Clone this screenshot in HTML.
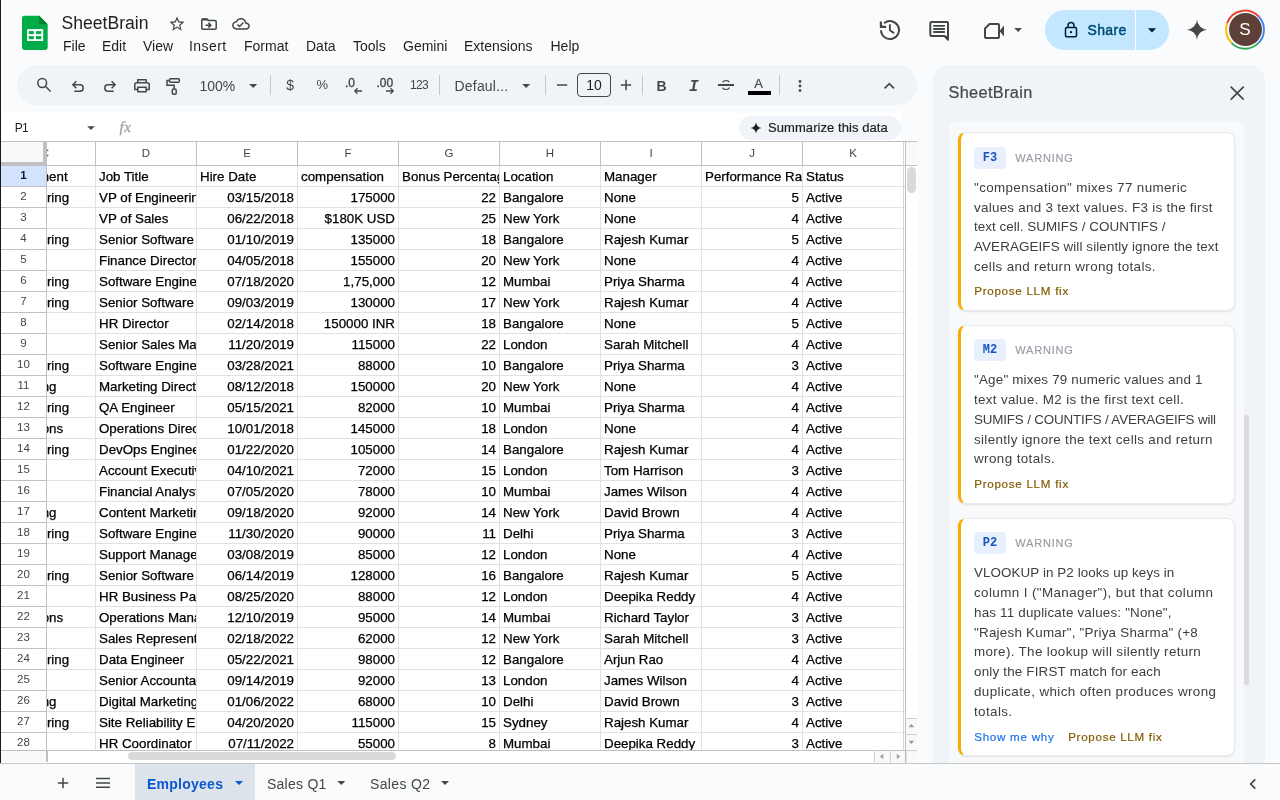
<!DOCTYPE html>
<html lang="en"><head><meta charset="utf-8"><title>SheetBrain - Google Sheets</title>
<style>
*{box-sizing:border-box;margin:0;padding:0}
html{background:#f9fbfd}
html,body{width:1280px;height:800px;overflow:hidden;background:#f9fbfd;font-family:"Liberation Sans",sans-serif;color:#1f1f1f}
body{will-change:transform;position:relative}
.abs{position:absolute}
#edge{left:0;top:0;width:1px;height:800px;background:#1b1b1b}
/* header */
#title{left:61.5px;top:11px;font-size:17.6px;line-height:24px;color:#1f1f1f;white-space:nowrap}
.menu{top:37px;font-size:14px;line-height:18px;color:#1f1f1f;white-space:nowrap}
svg{display:block;position:absolute;overflow:visible}
/* toolbar */
#tb{left:17px;top:65px;width:900px;height:40px;border-radius:20px;background:#f0f4f9}
.tsep{top:75px;width:1px;height:20px;background:#c7c7c7}
.tt{font-size:14px;line-height:18px;color:#444746;white-space:nowrap}
/* formula bar */
#fb{left:1px;top:113px;width:900px;height:28px;background:#fff}
/* grid */
#gridbg{left:1px;top:141px;width:916px;height:622px;background:#fff}
#cells{left:47px;top:142px;width:857px;height:609px;overflow:hidden;background:#fff}
.c{position:absolute;width:101px;height:21px;border-right:1px solid #e1e1e1;border-bottom:1px solid #e1e1e1;font-size:13.33px;line-height:20px;padding:1px 3px 0 3px;white-space:nowrap;overflow:hidden;color:#000;background:#fff;-webkit-text-stroke:0.25px #000}
.c.r{text-align:right}
.ch{position:absolute;top:0;width:101px;height:24px;border-right:1px solid #c0c0c0;border-bottom:1px solid #c0c0c0;font-size:11.5px;line-height:23px;text-align:center;color:#444746;background:#fff}
#rowh{left:1px;top:142px;width:46px;height:609px;overflow:hidden;background:#fff}
.rh{position:absolute;left:0;width:46px;height:21px;border-right:1px solid #c0c0c0;border-bottom:1px solid #c0c0c0;font-size:11.5px;line-height:19px;text-align:center;color:#444746;background:#fff}
.rh.sel{background:#d3e3fd;color:#041e49;font-weight:bold}
#corner{left:1px;top:142px;width:46px;height:24px;background:#f8f9fa;border-right:4px solid #c0c0c0;border-bottom:4px solid #c0c0c0}

/* share */
#share{left:1045px;top:10px;width:124px;height:40px;border-radius:20px;background:#c2e7ff}
#sharetxt{left:1087.5px;top:21px;font-size:14px;line-height:18px;-webkit-text-stroke:0.45px #004a77;letter-spacing:0.35px;color:#004a77;white-space:nowrap}
#avatar{left:1228.5px;top:13.2px;width:33px;height:33px;border-radius:50%;background:#5d4037;color:#fff;font-size:17px;line-height:34px;text-align:center}
/* formula */
#namebox{left:14.7px;top:119px;font-size:12px;line-height:18px;color:#1f1f1f;letter-spacing:-0.6px}
#fx{left:119.5px;top:116px;font-family:"Liberation Serif",serif;font-style:italic;font-size:15px;line-height:22px;color:#9aa0a6;letter-spacing:0.6px;-webkit-text-stroke:0.3px #9aa0a6}
#summ{left:739px;top:116px;width:162px;height:24px;border-radius:12px;background:#f0f4f9}
#summtxt{left:768px;top:119px;font-size:13px;line-height:18px;color:#1f1f1f;white-space:nowrap;letter-spacing:0.07px;-webkit-text-stroke:0.2px #1f1f1f}
/* scrollbars */
.ln{position:absolute;background:#c0c0c0}
/* bottom */
#bline{z-index:5;left:0;top:763px;width:1280px;height:1px;background:#c4c7c5}
#bbar{z-index:5;left:0;top:764px;width:1280px;height:36px;background:#f9fbfd}
#tab1{z-index:6;left:135px;top:764px;width:120px;height:36px;background:#dde3ea}
.tabt{z-index:7;top:774.6px;font-size:14px;line-height:18px;white-space:nowrap;color:#444746}
/* sidebar */
#side{left:933px;top:65px;width:332px;height:720px;border-radius:16px 16px 0 0;background:#f0f4f9}
#sidet{left:948.5px;top:81.2px;font-size:16.3px;line-height:22px;color:#444746;white-space:nowrap;letter-spacing:0.35px;-webkit-text-stroke:0.2px #444746}
#frame{left:949px;top:121px;width:295px;height:642px;background:#f8f9fa;border-radius:8px 8px 0 0;overflow:hidden}
.card{position:absolute;left:9px;width:276.5px;background:#fff;border:1px solid #e8eaed;border-left:3px solid #f9ab00;border-radius:8px;box-shadow:0 1px 2px rgba(60,64,67,.12)}
.badge{position:absolute;left:13px;top:13.4px;width:32px;height:22px;border-radius:4px;background:#e8f0fe;color:#1a54c0;font-family:"Liberation Mono",monospace;font-weight:bold;font-size:12px;line-height:23.4px;text-align:center}
.warn{position:absolute;left:54.3px;top:16.5px;font-size:11px;line-height:16px;letter-spacing:0.8px;color:#9aa0a6;white-space:nowrap;-webkit-text-stroke:0.2px #9aa0a6}
.ctext{position:absolute;left:13px;top:44.4px;font-size:13.4px;line-height:19.8px;color:#3c4043;white-space:nowrap}
.act{position:absolute;font-size:11.6px;line-height:16px;white-space:nowrap;color:#835b00;-webkit-text-stroke:0.2px #835b00}
.act.b{color:#1a73e8;-webkit-text-stroke:0.2px #1a73e8}
#sthumb{left:1244px;top:415px;width:5px;height:270px;border-radius:3px;background:#d9dbdf}
</style></head><body>
<div id="edge" class="abs"></div>
<div id="title" class="abs">SheetBrain</div>
<div class="abs menu" style="left:63px">File</div>
<div class="abs menu" style="left:102px">Edit</div>
<div class="abs menu" style="left:143px">View</div>
<div class="abs menu" style="left:189px;letter-spacing:0.45px">Insert</div>
<div class="abs menu" style="left:244px">Format</div>
<div class="abs menu" style="left:306px">Data</div>
<div class="abs menu" style="left:353px">Tools</div>
<div class="abs menu" style="left:403px">Gemini</div>
<div class="abs menu" style="left:464px">Extensions</div>
<div class="abs menu" style="left:550.5px">Help</div>
<div id="tb" class="abs"></div>
<div id="fb" class="abs"></div>
<div id="gridbg" class="abs"></div>
<div class="abs" style="left:1px;top:141px;width:916px;height:1px;background:#c0c0c0"></div>
<div id="cells" class="abs">
<div class="ch" style="left:-52px">C</div>
<div class="ch" style="left:49px">D</div>
<div class="ch" style="left:150px">E</div>
<div class="ch" style="left:251px">F</div>
<div class="ch" style="left:352px">G</div>
<div class="ch" style="left:453px">H</div>
<div class="ch" style="left:554px">I</div>
<div class="ch" style="left:655px">J</div>
<div class="ch" style="left:756px">K</div>
<div class="c" style="left:-52px;top:24px">Department</div>
<div class="c" style="left:49px;top:24px">Job Title</div>
<div class="c" style="left:150px;top:24px">Hire Date</div>
<div class="c" style="left:251px;top:24px">compensation</div>
<div class="c" style="left:352px;top:24px">Bonus Percentage</div>
<div class="c" style="left:453px;top:24px">Location</div>
<div class="c" style="left:554px;top:24px">Manager</div>
<div class="c" style="left:655px;top:24px">Performance Rating</div>
<div class="c" style="left:756px;top:24px">Status</div>
<div class="c" style="left:-52px;top:45px">Engineering</div>
<div class="c" style="left:49px;top:45px">VP of Engineering</div>
<div class="c r" style="left:150px;top:45px">03/15/2018</div>
<div class="c r" style="left:251px;top:45px">175000</div>
<div class="c r" style="left:352px;top:45px">22</div>
<div class="c" style="left:453px;top:45px">Bangalore</div>
<div class="c" style="left:554px;top:45px">None</div>
<div class="c r" style="left:655px;top:45px">5</div>
<div class="c" style="left:756px;top:45px">Active</div>
<div class="c" style="left:-52px;top:66px">Sales</div>
<div class="c" style="left:49px;top:66px">VP of Sales</div>
<div class="c r" style="left:150px;top:66px">06/22/2018</div>
<div class="c r" style="left:251px;top:66px">$180K USD</div>
<div class="c r" style="left:352px;top:66px">25</div>
<div class="c" style="left:453px;top:66px">New York</div>
<div class="c" style="left:554px;top:66px">None</div>
<div class="c r" style="left:655px;top:66px">4</div>
<div class="c" style="left:756px;top:66px">Active</div>
<div class="c" style="left:-52px;top:87px">Engineering</div>
<div class="c" style="left:49px;top:87px">Senior Software Engineer</div>
<div class="c r" style="left:150px;top:87px">01/10/2019</div>
<div class="c r" style="left:251px;top:87px">135000</div>
<div class="c r" style="left:352px;top:87px">18</div>
<div class="c" style="left:453px;top:87px">Bangalore</div>
<div class="c" style="left:554px;top:87px">Rajesh Kumar</div>
<div class="c r" style="left:655px;top:87px">5</div>
<div class="c" style="left:756px;top:87px">Active</div>
<div class="c" style="left:-52px;top:108px">Finance</div>
<div class="c" style="left:49px;top:108px">Finance Director</div>
<div class="c r" style="left:150px;top:108px">04/05/2018</div>
<div class="c r" style="left:251px;top:108px">155000</div>
<div class="c r" style="left:352px;top:108px">20</div>
<div class="c" style="left:453px;top:108px">New York</div>
<div class="c" style="left:554px;top:108px">None</div>
<div class="c r" style="left:655px;top:108px">4</div>
<div class="c" style="left:756px;top:108px">Active</div>
<div class="c" style="left:-52px;top:129px">Engineering</div>
<div class="c" style="left:49px;top:129px">Software Engineer</div>
<div class="c r" style="left:150px;top:129px">07/18/2020</div>
<div class="c r" style="left:251px;top:129px">1,75,000</div>
<div class="c r" style="left:352px;top:129px">12</div>
<div class="c" style="left:453px;top:129px">Mumbai</div>
<div class="c" style="left:554px;top:129px">Priya Sharma</div>
<div class="c r" style="left:655px;top:129px">4</div>
<div class="c" style="left:756px;top:129px">Active</div>
<div class="c" style="left:-52px;top:150px">Engineering</div>
<div class="c" style="left:49px;top:150px">Senior Software Engineer</div>
<div class="c r" style="left:150px;top:150px">09/03/2019</div>
<div class="c r" style="left:251px;top:150px">130000</div>
<div class="c r" style="left:352px;top:150px">17</div>
<div class="c" style="left:453px;top:150px">New York</div>
<div class="c" style="left:554px;top:150px">Rajesh Kumar</div>
<div class="c r" style="left:655px;top:150px">4</div>
<div class="c" style="left:756px;top:150px">Active</div>
<div class="c" style="left:-52px;top:171px">HR</div>
<div class="c" style="left:49px;top:171px">HR Director</div>
<div class="c r" style="left:150px;top:171px">02/14/2018</div>
<div class="c r" style="left:251px;top:171px">150000 INR</div>
<div class="c r" style="left:352px;top:171px">18</div>
<div class="c" style="left:453px;top:171px">Bangalore</div>
<div class="c" style="left:554px;top:171px">None</div>
<div class="c r" style="left:655px;top:171px">5</div>
<div class="c" style="left:756px;top:171px">Active</div>
<div class="c" style="left:-52px;top:192px">Sales</div>
<div class="c" style="left:49px;top:192px">Senior Sales Manager</div>
<div class="c r" style="left:150px;top:192px">11/20/2019</div>
<div class="c r" style="left:251px;top:192px">115000</div>
<div class="c r" style="left:352px;top:192px">22</div>
<div class="c" style="left:453px;top:192px">London</div>
<div class="c" style="left:554px;top:192px">Sarah Mitchell</div>
<div class="c r" style="left:655px;top:192px">4</div>
<div class="c" style="left:756px;top:192px">Active</div>
<div class="c" style="left:-52px;top:213px">Engineering</div>
<div class="c" style="left:49px;top:213px">Software Engineer</div>
<div class="c r" style="left:150px;top:213px">03/28/2021</div>
<div class="c r" style="left:251px;top:213px">88000</div>
<div class="c r" style="left:352px;top:213px">10</div>
<div class="c" style="left:453px;top:213px">Bangalore</div>
<div class="c" style="left:554px;top:213px">Priya Sharma</div>
<div class="c r" style="left:655px;top:213px">3</div>
<div class="c" style="left:756px;top:213px">Active</div>
<div class="c" style="left:-52px;top:234px">Marketing</div>
<div class="c" style="left:49px;top:234px">Marketing Director</div>
<div class="c r" style="left:150px;top:234px">08/12/2018</div>
<div class="c r" style="left:251px;top:234px">150000</div>
<div class="c r" style="left:352px;top:234px">20</div>
<div class="c" style="left:453px;top:234px">New York</div>
<div class="c" style="left:554px;top:234px">None</div>
<div class="c r" style="left:655px;top:234px">4</div>
<div class="c" style="left:756px;top:234px">Active</div>
<div class="c" style="left:-52px;top:255px">Engineering</div>
<div class="c" style="left:49px;top:255px">QA Engineer</div>
<div class="c r" style="left:150px;top:255px">05/15/2021</div>
<div class="c r" style="left:251px;top:255px">82000</div>
<div class="c r" style="left:352px;top:255px">10</div>
<div class="c" style="left:453px;top:255px">Mumbai</div>
<div class="c" style="left:554px;top:255px">Priya Sharma</div>
<div class="c r" style="left:655px;top:255px">4</div>
<div class="c" style="left:756px;top:255px">Active</div>
<div class="c" style="left:-52px;top:276px">Operations</div>
<div class="c" style="left:49px;top:276px">Operations Director</div>
<div class="c r" style="left:150px;top:276px">10/01/2018</div>
<div class="c r" style="left:251px;top:276px">145000</div>
<div class="c r" style="left:352px;top:276px">18</div>
<div class="c" style="left:453px;top:276px">London</div>
<div class="c" style="left:554px;top:276px">None</div>
<div class="c r" style="left:655px;top:276px">4</div>
<div class="c" style="left:756px;top:276px">Active</div>
<div class="c" style="left:-52px;top:297px">Engineering</div>
<div class="c" style="left:49px;top:297px">DevOps Engineer</div>
<div class="c r" style="left:150px;top:297px">01/22/2020</div>
<div class="c r" style="left:251px;top:297px">105000</div>
<div class="c r" style="left:352px;top:297px">14</div>
<div class="c" style="left:453px;top:297px">Bangalore</div>
<div class="c" style="left:554px;top:297px">Rajesh Kumar</div>
<div class="c r" style="left:655px;top:297px">4</div>
<div class="c" style="left:756px;top:297px">Active</div>
<div class="c" style="left:-52px;top:318px">Sales</div>
<div class="c" style="left:49px;top:318px">Account Executive</div>
<div class="c r" style="left:150px;top:318px">04/10/2021</div>
<div class="c r" style="left:251px;top:318px">72000</div>
<div class="c r" style="left:352px;top:318px">15</div>
<div class="c" style="left:453px;top:318px">London</div>
<div class="c" style="left:554px;top:318px">Tom Harrison</div>
<div class="c r" style="left:655px;top:318px">3</div>
<div class="c" style="left:756px;top:318px">Active</div>
<div class="c" style="left:-52px;top:339px">Finance</div>
<div class="c" style="left:49px;top:339px">Financial Analyst</div>
<div class="c r" style="left:150px;top:339px">07/05/2020</div>
<div class="c r" style="left:251px;top:339px">78000</div>
<div class="c r" style="left:352px;top:339px">10</div>
<div class="c" style="left:453px;top:339px">Mumbai</div>
<div class="c" style="left:554px;top:339px">James Wilson</div>
<div class="c r" style="left:655px;top:339px">4</div>
<div class="c" style="left:756px;top:339px">Active</div>
<div class="c" style="left:-52px;top:360px">Marketing</div>
<div class="c" style="left:49px;top:360px">Content Marketing Manager</div>
<div class="c r" style="left:150px;top:360px">09/18/2020</div>
<div class="c r" style="left:251px;top:360px">92000</div>
<div class="c r" style="left:352px;top:360px">14</div>
<div class="c" style="left:453px;top:360px">New York</div>
<div class="c" style="left:554px;top:360px">David Brown</div>
<div class="c r" style="left:655px;top:360px">4</div>
<div class="c" style="left:756px;top:360px">Active</div>
<div class="c" style="left:-52px;top:381px">Engineering</div>
<div class="c" style="left:49px;top:381px">Software Engineer</div>
<div class="c r" style="left:150px;top:381px">11/30/2020</div>
<div class="c r" style="left:251px;top:381px">90000</div>
<div class="c r" style="left:352px;top:381px">11</div>
<div class="c" style="left:453px;top:381px">Delhi</div>
<div class="c" style="left:554px;top:381px">Priya Sharma</div>
<div class="c r" style="left:655px;top:381px">3</div>
<div class="c" style="left:756px;top:381px">Active</div>
<div class="c" style="left:-52px;top:402px">Support</div>
<div class="c" style="left:49px;top:402px">Support Manager</div>
<div class="c r" style="left:150px;top:402px">03/08/2019</div>
<div class="c r" style="left:251px;top:402px">85000</div>
<div class="c r" style="left:352px;top:402px">12</div>
<div class="c" style="left:453px;top:402px">London</div>
<div class="c" style="left:554px;top:402px">None</div>
<div class="c r" style="left:655px;top:402px">4</div>
<div class="c" style="left:756px;top:402px">Active</div>
<div class="c" style="left:-52px;top:423px">Engineering</div>
<div class="c" style="left:49px;top:423px">Senior Software Engineer</div>
<div class="c r" style="left:150px;top:423px">06/14/2019</div>
<div class="c r" style="left:251px;top:423px">128000</div>
<div class="c r" style="left:352px;top:423px">16</div>
<div class="c" style="left:453px;top:423px">Bangalore</div>
<div class="c" style="left:554px;top:423px">Rajesh Kumar</div>
<div class="c r" style="left:655px;top:423px">5</div>
<div class="c" style="left:756px;top:423px">Active</div>
<div class="c" style="left:-52px;top:444px">HR</div>
<div class="c" style="left:49px;top:444px">HR Business Partner</div>
<div class="c r" style="left:150px;top:444px">08/25/2020</div>
<div class="c r" style="left:251px;top:444px">88000</div>
<div class="c r" style="left:352px;top:444px">12</div>
<div class="c" style="left:453px;top:444px">London</div>
<div class="c" style="left:554px;top:444px">Deepika Reddy</div>
<div class="c r" style="left:655px;top:444px">4</div>
<div class="c" style="left:756px;top:444px">Active</div>
<div class="c" style="left:-52px;top:465px">Operations</div>
<div class="c" style="left:49px;top:465px">Operations Manager</div>
<div class="c r" style="left:150px;top:465px">12/10/2019</div>
<div class="c r" style="left:251px;top:465px">95000</div>
<div class="c r" style="left:352px;top:465px">14</div>
<div class="c" style="left:453px;top:465px">Mumbai</div>
<div class="c" style="left:554px;top:465px">Richard Taylor</div>
<div class="c r" style="left:655px;top:465px">3</div>
<div class="c" style="left:756px;top:465px">Active</div>
<div class="c" style="left:-52px;top:486px">Sales</div>
<div class="c" style="left:49px;top:486px">Sales Representative</div>
<div class="c r" style="left:150px;top:486px">02/18/2022</div>
<div class="c r" style="left:251px;top:486px">62000</div>
<div class="c r" style="left:352px;top:486px">12</div>
<div class="c" style="left:453px;top:486px">New York</div>
<div class="c" style="left:554px;top:486px">Sarah Mitchell</div>
<div class="c r" style="left:655px;top:486px">3</div>
<div class="c" style="left:756px;top:486px">Active</div>
<div class="c" style="left:-52px;top:507px">Engineering</div>
<div class="c" style="left:49px;top:507px">Data Engineer</div>
<div class="c r" style="left:150px;top:507px">05/22/2021</div>
<div class="c r" style="left:251px;top:507px">98000</div>
<div class="c r" style="left:352px;top:507px">12</div>
<div class="c" style="left:453px;top:507px">Bangalore</div>
<div class="c" style="left:554px;top:507px">Arjun Rao</div>
<div class="c r" style="left:655px;top:507px">4</div>
<div class="c" style="left:756px;top:507px">Active</div>
<div class="c" style="left:-52px;top:528px">Finance</div>
<div class="c" style="left:49px;top:528px">Senior Accountant</div>
<div class="c r" style="left:150px;top:528px">09/14/2019</div>
<div class="c r" style="left:251px;top:528px">92000</div>
<div class="c r" style="left:352px;top:528px">13</div>
<div class="c" style="left:453px;top:528px">London</div>
<div class="c" style="left:554px;top:528px">James Wilson</div>
<div class="c r" style="left:655px;top:528px">4</div>
<div class="c" style="left:756px;top:528px">Active</div>
<div class="c" style="left:-52px;top:549px">Marketing</div>
<div class="c" style="left:49px;top:549px">Digital Marketing Specialist</div>
<div class="c r" style="left:150px;top:549px">01/06/2022</div>
<div class="c r" style="left:251px;top:549px">68000</div>
<div class="c r" style="left:352px;top:549px">10</div>
<div class="c" style="left:453px;top:549px">Delhi</div>
<div class="c" style="left:554px;top:549px">David Brown</div>
<div class="c r" style="left:655px;top:549px">3</div>
<div class="c" style="left:756px;top:549px">Active</div>
<div class="c" style="left:-52px;top:570px">Engineering</div>
<div class="c" style="left:49px;top:570px">Site Reliability Engineer</div>
<div class="c r" style="left:150px;top:570px">04/20/2020</div>
<div class="c r" style="left:251px;top:570px">115000</div>
<div class="c r" style="left:352px;top:570px">15</div>
<div class="c" style="left:453px;top:570px">Sydney</div>
<div class="c" style="left:554px;top:570px">Rajesh Kumar</div>
<div class="c r" style="left:655px;top:570px">4</div>
<div class="c" style="left:756px;top:570px">Active</div>
<div class="c" style="left:-52px;top:591px">HR</div>
<div class="c" style="left:49px;top:591px">HR Coordinator</div>
<div class="c r" style="left:150px;top:591px">07/11/2022</div>
<div class="c r" style="left:251px;top:591px">55000</div>
<div class="c r" style="left:352px;top:591px">8</div>
<div class="c" style="left:453px;top:591px">Mumbai</div>
<div class="c" style="left:554px;top:591px">Deepika Reddy</div>
<div class="c r" style="left:655px;top:591px">3</div>
<div class="c" style="left:756px;top:591px">Active</div>
</div>
<div id="rowh" class="abs">
<div class="rh sel" style="top:24px">1</div>
<div class="rh" style="top:45px">2</div>
<div class="rh" style="top:66px">3</div>
<div class="rh" style="top:87px">4</div>
<div class="rh" style="top:108px">5</div>
<div class="rh" style="top:129px">6</div>
<div class="rh" style="top:150px">7</div>
<div class="rh" style="top:171px">8</div>
<div class="rh" style="top:192px">9</div>
<div class="rh" style="top:213px">10</div>
<div class="rh" style="top:234px">11</div>
<div class="rh" style="top:255px">12</div>
<div class="rh" style="top:276px">13</div>
<div class="rh" style="top:297px">14</div>
<div class="rh" style="top:318px">15</div>
<div class="rh" style="top:339px">16</div>
<div class="rh" style="top:360px">17</div>
<div class="rh" style="top:381px">18</div>
<div class="rh" style="top:402px">19</div>
<div class="rh" style="top:423px">20</div>
<div class="rh" style="top:444px">21</div>
<div class="rh" style="top:465px">22</div>
<div class="rh" style="top:486px">23</div>
<div class="rh" style="top:507px">24</div>
<div class="rh" style="top:528px">25</div>
<div class="rh" style="top:549px">26</div>
<div class="rh" style="top:570px">27</div>
<div class="rh" style="top:591px">28</div>
</div>
<div id="corner" class="abs"></div>
<!-- right header -->
<div id="share" class="abs"></div>
<div class="abs" style="left:1135px;top:10px;width:1px;height:40px;background:#f9fbfd"></div>
<div id="sharetxt" class="abs">Share</div>
<div id="avatar" class="abs">S</div>
<!-- formula bar contents -->
<div id="namebox" class="abs">P1</div>
<div id="fx" class="abs">fx</div>
<div id="summ" class="abs"></div>
<div id="summtxt" class="abs">Summarize this data</div>
<!-- toolbar text -->
<div class="abs tt" style="left:199.5px;top:77px">100%</div>
<div class="abs tt" style="left:454.5px;top:76.5px;letter-spacing:0.2px">Defaul...</div>
<div class="abs tsep" style="left:270px"></div>
<div class="abs tsep" style="left:439px"></div>
<div class="abs tsep" style="left:545px"></div>
<div class="abs tsep" style="left:642px"></div>
<div class="abs tsep" style="left:779px"></div>
<div class="abs tt" style="left:286.3px;top:75.5px;font-size:14px;letter-spacing:-1px">$</div>
<div class="abs tt" style="left:316.5px;top:76px;font-size:13px">%</div>
<div class="abs tt" style="left:345px;top:73.5px;font-size:12px;-webkit-text-stroke:0.35px #444746">.0</div>
<div class="abs tt" style="left:376.5px;top:73.5px;font-size:12px;-webkit-text-stroke:0.35px #444746">.00</div>
<div class="abs tt" style="left:410px;top:76px;font-size:12px;letter-spacing:-0.7px">123</div>
<div class="abs" style="left:577px;top:73px;width:34px;height:24px;border:1px solid #444746;border-radius:4px;font-size:14px;line-height:22px;text-align:center;color:#1f1f1f">10</div>
<div class="abs tt" style="left:656.5px;top:76.5px;font-weight:bold;font-size:14px">B</div>
<div class="abs tt" style="left:689px;top:78px;font-family:'Liberation Mono',monospace;font-style:italic;font-weight:bold;font-size:16px">I</div>
<div class="abs tt" style="left:721.3px;top:76px;font-size:14px">S</div><div class="abs" style="left:718px;top:84.3px;width:16px;height:1.5px;background:#444746;box-shadow:0 -1.5px 0 #f0f4f9,0 1.5px 0 #f0f4f9"></div>
<div class="abs tt" style="left:754.3px;top:74.5px;font-size:13px;-webkit-text-stroke:0.2px #444746">A</div>
<div class="abs" style="left:748px;top:91px;width:23px;height:4px;background:#000"></div>
<!-- scrollbars -->
<div class="abs" style="left:906px;top:142px;width:11px;height:23px;background:#f8f9fa"></div>
<div class="ln" style="left:903px;top:142px;width:1px;height:609px;background:#d5d5d5"></div>
<div class="ln" style="left:905px;top:142px;width:1px;height:621px"></div>
<div class="abs" style="left:904px;top:166px;width:1px;height:584px;background:repeating-linear-gradient(to bottom,#fff 0,#fff 20px,#e1e1e1 20px,#e1e1e1 21px)"></div>
<div class="ln" style="left:904px;top:165px;width:13px;height:1px"></div>
<div class="abs" style="left:907px;top:167px;width:9px;height:26px;border-radius:5px;background:#dadada"></div>
<div class="ln" style="left:1px;top:750px;width:904px;height:1px"></div>
<div class="abs" style="left:1px;top:751px;width:45px;height:11px;background:#f8f9fa"></div>
<div class="abs" style="left:906px;top:719px;width:11px;height:44px;background:#f8f9fa"></div>
<div class="abs" style="left:875px;top:751px;width:30px;height:12px;background:#f8f9fa"></div>
<div class="ln" style="left:46px;top:750px;width:1.6px;height:12px"></div>
<div class="abs" style="left:128px;top:752px;width:268px;height:8px;border-radius:4px;background:#dadada"></div>
<!-- bottom bar -->
<div id="bbar" class="abs"></div>
<div id="bline" class="abs"></div>
<div id="tab1" class="abs"></div>
<div class="abs tabt" style="left:147px;color:#0b57d0;font-weight:bold;letter-spacing:0.25px">Employees</div>
<div class="abs tabt" style="left:267px;letter-spacing:0.25px">Sales Q1</div>
<div class="abs tabt" style="left:370px;letter-spacing:0.35px">Sales Q2</div>
<!-- sidebar -->
<div id="side" class="abs"></div>
<div id="sidet" class="abs">SheetBrain</div>
<div id="frame" class="abs">
<div class="card" style="top:11.4px;height:179px">
<div class="badge">F3</div><div class="warn">WARNING</div>
<div class="ctext">
<span style="letter-spacing:0.372px">"compensation" mixes 77 numeric</span><br>
<span style="letter-spacing:0.268px">values and 3 text values. F3 is the first</span><br>
<span style="letter-spacing:0.036px">text cell. SUMIFS / COUNTIFS /</span><br>
<span style="letter-spacing:0.109px">AVERAGEIFS will silently ignore the text</span><br>
<span style="letter-spacing:0.355px">cells and return wrong totals.</span><br>
</div>
<div class="act" style="left:13.2px;top:150px;letter-spacing:0.730px">Propose LLM fix</div>
</div>
<div class="card" style="top:203.9px;height:179px">
<div class="badge">M2</div><div class="warn">WARNING</div>
<div class="ctext">
<span style="letter-spacing:0.199px">"Age" mixes 79 numeric values and 1</span><br>
<span style="letter-spacing:0.337px">text value. M2 is the first text cell.</span><br>
<span style="letter-spacing:-0.162px">SUMIFS / COUNTIFS / AVERAGEIFS will</span><br>
<span style="letter-spacing:0.343px">silently ignore the text cells and return</span><br>
<span style="letter-spacing:0.407px">wrong totals.</span><br>
</div>
<div class="act" style="left:13.2px;top:150px;letter-spacing:0.730px">Propose LLM fix</div>
</div>
<div class="card" style="top:396.9px;height:238.6px">
<div class="badge">P2</div><div class="warn">WARNING</div>
<div class="ctext">
<span style="letter-spacing:0.088px">VLOOKUP in P2 looks up keys in</span><br>
<span style="letter-spacing:0.400px">column I ("Manager"), but that column</span><br>
<span style="letter-spacing:0.189px">has 11 duplicate values: "None",</span><br>
<span style="letter-spacing:0.238px">"Rajesh Kumar", "Priya Sharma" (+8</span><br>
<span style="letter-spacing:0.343px">more). The lookup will silently return</span><br>
<span style="letter-spacing:0.191px">only the FIRST match for each</span><br>
<span style="letter-spacing:0.395px">duplicate, which often produces wrong</span><br>
<span style="letter-spacing:0.394px">totals.</span><br>
</div>
<div class="act b" style="left:13.2px;top:209.8px;letter-spacing:0.743px">Show me why</div>
<div class="act" style="left:107.2px;top:209.8px;letter-spacing:0.701px">Propose LLM fix</div>
</div>
</div>
<div id="sthumb" class="abs"></div>
<svg class="abs" style="left:0;top:0;z-index:9" width="1280" height="800" viewBox="0 0 1280 800" fill="none" stroke="#444746" stroke-width="1.5">
<!-- sheets logo -->
<g stroke="none">
<path d="M24.4 15.8h14.8l8.5 8.4v23.3a2.4 2.4 0 0 1-2.4 2.4h-20.9a2.4 2.4 0 0 1-2.4-2.4v-29.3a2.4 2.4 0 0 1 2.4-2.4z" fill="#00ac47"/>
<path d="M39.2 15.8l8.5 8.4h-8.5z" fill="#00832d"/>
<rect x="27.1" y="29.1" width="16.1" height="11.9" fill="#fff"/>
<rect x="28.8" y="31.1" width="5" height="3" fill="#00ac47"/><rect x="36" y="31.1" width="5.3" height="3" fill="#00ac47"/>
<rect x="28.8" y="36.1" width="5" height="3.1" fill="#00ac47"/><rect x="36" y="36.1" width="5.3" height="3.1" fill="#00ac47"/>
</g>
<!-- star, folder, cloud -->
<g stroke="none" fill="#444746">
<path transform="translate(168 14.9) scale(0.75)" d="M22 9.24l-7.19-.62L12 2 9.19 8.63 2 9.24l5.46 4.73L5.82 21 12 17.27 18.18 21l-1.63-7.03L22 9.24zM12 15.4l-3.76 2.27 1-4.28-3.32-2.88 4.38-.38L12 6.1l1.71 4.04 4.38.38-3.32 2.88 1 4.28L12 15.4z"/>
<path transform="translate(232.1 14.95) scale(0.742)" d="M19.35 10.04C18.67 6.59 15.64 4 12 4 9.11 4 6.6 5.64 5.35 8.04 2.34 8.36 0 10.91 0 14c0 3.31 2.69 6 6 6h13c2.76 0 5-2.24 5-5 0-2.64-2.05-4.78-4.65-4.96zM19 18H6c-2.21 0-4-1.79-4-4 0-2.05 1.53-3.76 3.56-3.97l1.07-.11.5-.95C8.08 7.14 9.94 6 12 6c2.62 0 4.88 1.86 5.39 4.43l.3 1.5 1.53.11c1.56.1 2.78 1.41 2.78 2.96 0 1.65-1.35 3-3 3zm-9-3.82l-2.09-2.09L6.5 13.5 10 17l6.01-6.01-1.41-1.41z"/>
</g>
<path d="M203 19h4l1.6 1.6h6.4a1.2 1.2 0 0 1 1.2 1.2v6.2a1.2 1.2 0 0 1-1.2 1.2h-12a1.2 1.2 0 0 1-1.2-1.2v-7.8a1.2 1.2 0 0 1 1.2-1.2z" stroke-linejoin="round"/><path d="M201.8 18.6h5.4l1.7 1.9h-7.1z" fill="#444746" stroke="none"/>
<path d="M205.5 25.2h5M208.4 22.8l2.4 2.4-2.4 2.4" stroke-width="1.6"/>
<!-- history -->
<g stroke-width="2">
<path d="M884.10 23.21A9 9 0 1 1 881.01 30.31"/>
<path d="M880.9 21.6v5.3h5.2" stroke-width="2.2"/><path d="M881 24l3 3h-3z" fill="#444746" stroke="none"/>
<path d="M889.9 24.3v6l4.2 2.8" stroke-width="1.9"/>
<!-- comment -->
<path d="M931.8 22H947a1 1 0 0 1 1 1V39.8L944.6 36H931.8a1.5 1.5 0 0 1-1.5-1.5V23.5a1.5 1.5 0 0 1 1.5-1.5z" stroke-linejoin="round" /><path d="M944 36h4.5v4.2z" fill="#444746" stroke="none"/>
<path d="M933.2 25.9h11.7M933.2 29h11.7M933.2 32h11.7" stroke-width="1.8"/>
<!-- video -->
<path d="M989.5 24h8.5a1 1 0 0 1 1 1v12a1 1 0 0 1-1 1h-12a1 1 0 0 1-1-1v-8.5z" stroke-linejoin="round"/>
</g>
<path d="M999.4 31l4.6-5.6v11.2z" fill="#444746" stroke="none"/>
<path d="M1014.2 28h7.8l-3.9 3.9z" fill="#444746" stroke="none"/>
<!-- lock -->
<g stroke="#001d35">
<rect x="1065.5" y="27.5" width="11" height="9.2" rx="1.2"/>
<path d="M1068 27.5v-2a3 3 0 0 1 6 0v2"/>
<circle cx="1071" cy="32.1" r="1.2" fill="#001d35" stroke="none"/>
</g>
<path d="M1148 28.3h8l-4 4.1z" fill="#001d35" stroke="none"/>
<!-- gemini spark -->
<path d="M1197 19.7A10.6 10.6 0 0 0 1207 29.7A10.6 10.6 0 0 0 1197 39.7A10.6 10.6 0 0 0 1187 29.7A10.6 10.6 0 0 0 1197 19.7z" fill="#444746" stroke="none"/>
<!-- avatar ring -->
<g stroke-width="2" fill="none">
<path d="M1227.1 23.2A19 19 0 0 1 1259.1 17.0" stroke="#ea4335"/>
<path d="M1259.1 17.0A19 19 0 0 1 1258.4 43.1" stroke="#4285f4"/>
<path d="M1258.4 43.1A19 19 0 0 1 1231.6 43.1" stroke="#34a853"/>
<path d="M1231.6 43.1A19 19 0 0 1 1227.1 23.2" stroke="#fbbc04"/>
</g>
<!-- toolbar: search -->
<circle cx="42.2" cy="83" r="4.4"/>
<path d="M45.4 86.3l5.2 5.2"/>
<!-- undo / redo -->
<path d="M74.3 91.2H80a3.2 3.2 0 0 0 0-6.4H73.2M76.4 81.3l-3.5 3.5 3.5 3.5"/>
<path d="M113.7 91.2H108a3.2 3.2 0 0 1 0-6.4h6.8M111.6 81.3l3.5 3.5-3.5 3.5"/>
<!-- print -->
<path d="M137.8 82.7v-2.9h8.4v2.9M137.8 89.5h-3v-4.8a2 2 0 0 1 2-2h10.4a2 2 0 0 1 2 2v4.8h-3M137.8 87.2h8.4v4.6h-8.4z" stroke-linejoin="round"/>
<!-- paint format -->
<rect x="169.5" y="78.7" width="9.8" height="3.6" rx="1"/>
<path d="M169.5 80.5h-2.5v4.8h7.2v3.5"/>
<rect x="172.3" y="89" width="3.9" height="5.2" rx="1.2"/>
<!-- carets -->
<g fill="#444746" stroke="none">
<path d="M249.2 84h8l-4 4z"/>
<path d="M522.2 84h8l-4 4z"/>
<path d="M87.2 126.3h7.6l-3.8 3.7z"/>
<path d="M337.3 781h8l-4 4z"/><path d="M441 781h8l-4 4z"/>
<circle cx="800" cy="81.4" r="1.4"/><circle cx="800" cy="86" r="1.4"/><circle cx="800" cy="90.6" r="1.4"/>
</g>
<path d="M235 781h8l-4 4z" fill="#0b57d0" stroke="none"/>
<!-- decimal arrows -->
<path d="M362 91h-7M357.5 88.3l-2.7 2.7 2.7 2.7" stroke-width="1.3"/>
<path d="M386 91h7M390.5 88.3l2.7 2.7-2.7 2.7" stroke-width="1.3"/>
<!-- minus plus -->
<path d="M557 85h10.2M620.8 85h10.4M626 79.8v10.4"/>
<!-- collapse chevron -->
<path d="M884.6 88.4l4.7-4.7 4.7 4.7" stroke-width="1.7"/>
<!-- summarize spark -->
<path d="M756 122.3A6 6 0 0 0 761.7 128A6 6 0 0 0 756 133.7A6 6 0 0 0 750.3 128A6 6 0 0 0 756 122.3z" fill="#1f1f1f" stroke="none"/>
<!-- sidebar close -->
<path d="M1230.7 86.7l13 13M1243.7 86.7l-13 13" stroke-width="1.7"/>
<!-- bottom: plus, hamburger, chevron -->
<path d="M57.8 783h10.4M63 777.8v10.4"/>
<path d="M96 778.6h14M96 783h14M96 787.3h14"/>
<path d="M1255.3 779.4L1250.7 784L1255.3 788.6" stroke-width="1.7"/>
<!-- scroll arrows -->
<g fill="#9e9e9e" stroke="none">
<path d="M908.6 727.2h5.6l-2.8-3.5z"/><path d="M908.6 740.8h5.6l-2.8 3.5z"/>
<path d="M883.3 753.8v5.4l-3.4-2.7z"/><path d="M896.8 753.8v5.4l3.4-2.7z"/>
</g>
<g stroke="#cfcfcf" stroke-width="1">
<path d="M905.5 718.5h11.5M905.5 734.5h11.5M905.5 750.5h11.5M874.5 750.5v12M890.5 750.5v12"/><path d="M905.7 750v12.5" stroke="#c0c0c0" stroke-width="1.6"/>
</g>
</svg>


</body></html>
